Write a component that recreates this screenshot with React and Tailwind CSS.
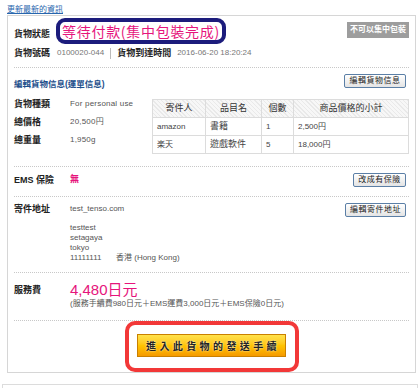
import React from "react";

const Btn = ({ children, w }) => (
  <button
    className={`h-[14px] ${w} mr-[3px] rounded-[2px] border border-[#5b7fa6] bg-gradient-to-b from-white to-[#e4e4e4] text-[8px] leading-[12px] text-[#222] tracking-[0.5px] shrink-0`}
  >
    {children}
  </button>
);

const Label = ({ children, className = "" }) => (
  <div className={`w-[56px] shrink-0 text-[9px] font-bold text-[#222] ${className}`}>{children}</div>
);

export default function App() {
  const rows = [
    { from: "amazon", item: "書籍", qty: "1", price: "2,500円" },
    { from: "楽天", item: "遊戲軟件", qty: "5", price: "18,000円" },
  ];

  return (
    <div className="w-[420px] h-[390px] bg-white overflow-hidden [font-family:'Liberation_Sans','Noto_Sans_CJK_TC',sans-serif] text-[#444]">
      {/* top link */}
      <div className="pt-[5px] pl-[7px] h-[15px] text-[8px] leading-[10px] text-[#2766ad] underline">
        更新最新的資訊
      </div>

      {/* card */}
      <div className="relative ml-[7px] w-[409px] border border-[#d6d6d6] pl-[6px] pr-[6px]">
        {/* status */}
        <div className="pt-[6px] pb-[8px] border-b border-dotted border-[#c8c8c8]">
          <div className="flex justify-between items-start">
            <Label className="pt-[6px] leading-[12px]">貨物狀態</Label>
            <div className="h-[16px] px-[3px] bg-[#9d9d9d] text-white text-[8px] font-bold leading-[16px]">
              不可以集中包裝
            </div>
          </div>
          <div className="mt-[7px] flex items-center leading-[12px]">
            <Label className="leading-[12px]">貨物號碼</Label>
            <span className="text-[8px] text-[#777] -ml-[13px]">0100020-044</span>
            <span className="mx-[6px] h-[11px] border-l border-[#bbb]" />
            <span className="text-[9px] font-bold text-[#222]">貨物到達時間</span>
            <span className="ml-[6px] text-[8px] text-[#777]">2016-06-20 18:20:24</span>
          </div>
        </div>

        {/* status overlay annotation */}
        <div className="absolute left-[48px] top-[2px] w-[170px] h-[26px] rounded-[9px] border-4 border-[#1c1c7c] bg-white flex items-center justify-center">
          <span className="text-[14px] leading-[16px] tracking-[0.7px] text-[#e6157c] [font-family:'Noto_Sans_CJK_TC',sans-serif]">
            等待付款(集中包裝完成)
          </span>
        </div>

        {/* goods info */}
        <div className="pt-[6px] pb-[12px] border-b border-dotted border-[#c8c8c8]">
          <div className="flex justify-between items-start h-[16px]">
            <div className="pt-[4px] text-[8.5px] leading-[12px] font-bold text-[#1d4f8c]">
              編輯貨物信息(運單信息)
            </div>
            <Btn w="w-[62px]">編輯貨物信息</Btn>
          </div>
          <div className="flex items-start">
            <div className="w-[138px] shrink-0 pt-[5px]">
              {[
                ["貨物種類", "For personal use"],
                ["總價格", "20,500円"],
                ["總重量", "1,950g"],
              ].map(([k, v]) => (
                <div key={k} className="flex items-center h-[18px]">
                  <Label className="leading-[18px]">{k}</Label>
                  <span className="text-[8px] text-[#555] tracking-[0.2px]">{v}</span>
                </div>
              ))}
            </div>
            <table className="mt-[9px] w-[257px] border-collapse text-[8px] text-[#444]">
              <thead>
                <tr className="h-[18px] bg-[repeating-linear-gradient(45deg,#e9e9e9_0,#e9e9e9_1px,#f7f7f7_1px,#f7f7f7_3px)]">
                  <th className="w-[53px] border border-[#dcdcdc] font-normal text-[9px] text-[#333]">寄件人</th>
                  <th className="w-[56px] border border-[#dcdcdc] font-normal text-[9px] text-[#333]">品目名</th>
                  <th className="w-[32px] border border-[#dcdcdc] font-normal text-[9px] text-[#333]">個數</th>
                  <th className="border border-[#dcdcdc] font-normal text-[9px] text-[#333]">商品價格的小計</th>
                </tr>
              </thead>
              <tbody>
                {rows.map((r) => (
                  <tr key={r.from} className="h-[18px]">
                    <td className="border border-[#dcdcdc] pl-[4px] text-[8px]">{r.from}</td>
                    <td className="border border-[#dcdcdc] pl-[4px] text-[9px]">{r.item}</td>
                    <td className="border border-[#dcdcdc] pl-[4px] text-[8px]">{r.qty}</td>
                    <td className="border border-[#dcdcdc] pl-[4px] text-[8px]">{r.price}</td>
                  </tr>
                ))}
              </tbody>
            </table>
          </div>
        </div>

        {/* EMS insurance */}
        <div className="pt-[6px] pb-[9px] border-b border-dotted border-[#c8c8c8]">
          <div className="flex items-center justify-between h-[14px]">
            <div className="flex items-center">
              <Label className="leading-[12px]">EMS 保險</Label>
              <span className="text-[9px] font-bold text-[#e6157c]">無</span>
            </div>
            <Btn w="w-[53px]">改成有保險</Btn>
          </div>
        </div>

        {/* address */}
        <div className="pt-[6px] pb-[9px] border-b border-dotted border-[#c8c8c8]">
          <div className="flex items-start justify-between h-[14px]">
            <div className="flex items-center leading-[12px]">
              <Label className="leading-[12px]">寄件地址</Label>
              <span className="text-[8px] text-[#555]">test_tenso.com</span>
            </div>
            <Btn w="w-[61px]">編輯寄件地址</Btn>
          </div>
          <div className="mt-[6px] pl-[56px] text-[8px] leading-[10px] text-[#555]">
            <div>testtest</div>
            <div>setagaya</div>
            <div>tokyo</div>
            <div className="flex">
              <span className="w-[46px]">11111111</span>
              <span>香港 (Hong Kong)</span>
            </div>
          </div>
        </div>

        {/* service fee */}
        <div className="pt-[8px] pb-[11px] border-b border-dotted border-[#c8c8c8]">
          <div className="flex items-center h-[18px]">
            <Label className="leading-[18px]">服務費</Label>
            <span className="text-[15px] leading-[18px] text-[#e6157c]">4,480日元</span>
          </div>
          <div className="pl-[56px] text-[8px] leading-[10px] text-[#555]">
            (服務手續費980日元＋EMS運費3,000日元＋EMS保險0日元)
          </div>
        </div>

        {/* proceed button */}
        <div className="flex justify-center">
          <div className="w-[174px] h-[51px] rounded-[10px] border-4 border-[#f23838] flex items-center justify-center">
            <button className="w-[149px] h-[23px] mt-[-2px] border border-[#c98000] bg-gradient-to-b from-[#ffe24a] via-[#ffc400] to-[#f59a00] text-[10px] font-bold text-[#222] tracking-[3.4px] pl-[3px] [text-shadow:0_0_2px_#fff] [font-family:'Noto_Sans_CJK_TC',sans-serif]">
              進入此貨物的發送手續
            </button>
          </div>
        </div>
      </div>

      {/* next container edge */}
      <div className="mt-[11px] mx-[2px] h-[4px] border-t border-x border-[#dcdcdc]" />
    </div>
  );
}
